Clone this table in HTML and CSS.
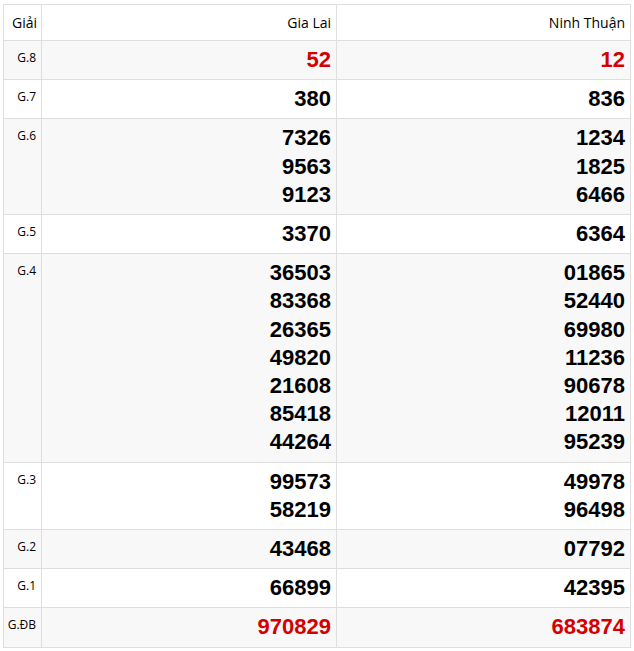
FILE: index.html
```html
<!DOCTYPE html>
<html lang="vi">
<head>
<meta charset="utf-8">
<title>Kết quả xổ số</title>
<link rel="stylesheet" href="styles.css">
</head>
<body>
<div class="wrap">
<table class="kq">
  <colgroup><col class="c-label"><col class="c-prov1"><col class="c-prov2"></colgroup>
  <thead>
    <tr><th class="lbl-h">Giải</th><th>Gia Lai</th><th>Ninh Thuận</th></tr>
  </thead>
  <tbody>
    <tr class="alt"><td class="lbl">G.8</td><td class="num red"><div>52</div></td><td class="num red"><div>12</div></td></tr>
    <tr><td class="lbl">G.7</td><td class="num"><div>380</div></td><td class="num"><div>836</div></td></tr>
    <tr class="alt"><td class="lbl">G.6</td><td class="num"><div>7326</div><div>9563</div><div>9123</div></td><td class="num"><div>1234</div><div>1825</div><div>6466</div></td></tr>
    <tr><td class="lbl">G.5</td><td class="num"><div>3370</div></td><td class="num"><div>6364</div></td></tr>
    <tr class="alt"><td class="lbl">G.4</td><td class="num"><div>36503</div><div>83368</div><div>26365</div><div>49820</div><div>21608</div><div>85418</div><div>44264</div></td><td class="num"><div>01865</div><div>52440</div><div>69980</div><div>11236</div><div>90678</div><div>12011</div><div>95239</div></td></tr>
    <tr><td class="lbl">G.3</td><td class="num"><div>99573</div><div>58219</div></td><td class="num"><div>49978</div><div>96498</div></td></tr>
    <tr class="alt"><td class="lbl">G.2</td><td class="num"><div>43468</div></td><td class="num"><div>07792</div></td></tr>
    <tr><td class="lbl">G.1</td><td class="num"><div>66899</div></td><td class="num"><div>42395</div></td></tr>
    <tr class="alt"><td class="lbl">G.ĐB</td><td class="num red"><div>970829</div></td><td class="num red"><div>683874</div></td></tr>
  </tbody>
</table>
</div>
</body>
</html>
```

FILE: styles.css
```css
html, body {
  margin: 0;
  padding: 0;
  background: #fff;
}
.wrap {
  padding: 4px 4px 0 3px;
}
.kq {
  width: 627px;
  border-collapse: collapse;
  table-layout: fixed;
  font-family: "Open Sans", "Noto Sans", sans-serif;
  color: #000;
}
.c-label { width: 38px; }
.c-prov1 { width: 295px; }
.c-prov2 { width: 294px; }
.kq th, .kq td {
  border: 1px solid #dedede;
}
.kq th {
  height: 35px;
  padding: 0 5px;
  font-size: 14px;
  font-weight: 400;
  text-align: right;
  vertical-align: middle;
  color: #000;
}
.kq th.lbl-h {
  padding: 0 4px;
}
.kq tr.alt td {
  background: #f8f8f8;
}
.kq td.lbl {
  vertical-align: top;
  text-align: right;
  padding: 9px 5px 0 0;
  font-size: 12px;
  line-height: 16px;
  color: #000;
}
.kq td.num {
  vertical-align: top;
  text-align: right;
  padding: 5px 5px 5px 5px;
  font-family: "Liberation Sans", Arial, sans-serif;
  font-weight: 700;
  font-size: 22px;
  line-height: 28.2px;
  color: #000;
}
.kq td.num.red {
  color: #d40000;
}
```
